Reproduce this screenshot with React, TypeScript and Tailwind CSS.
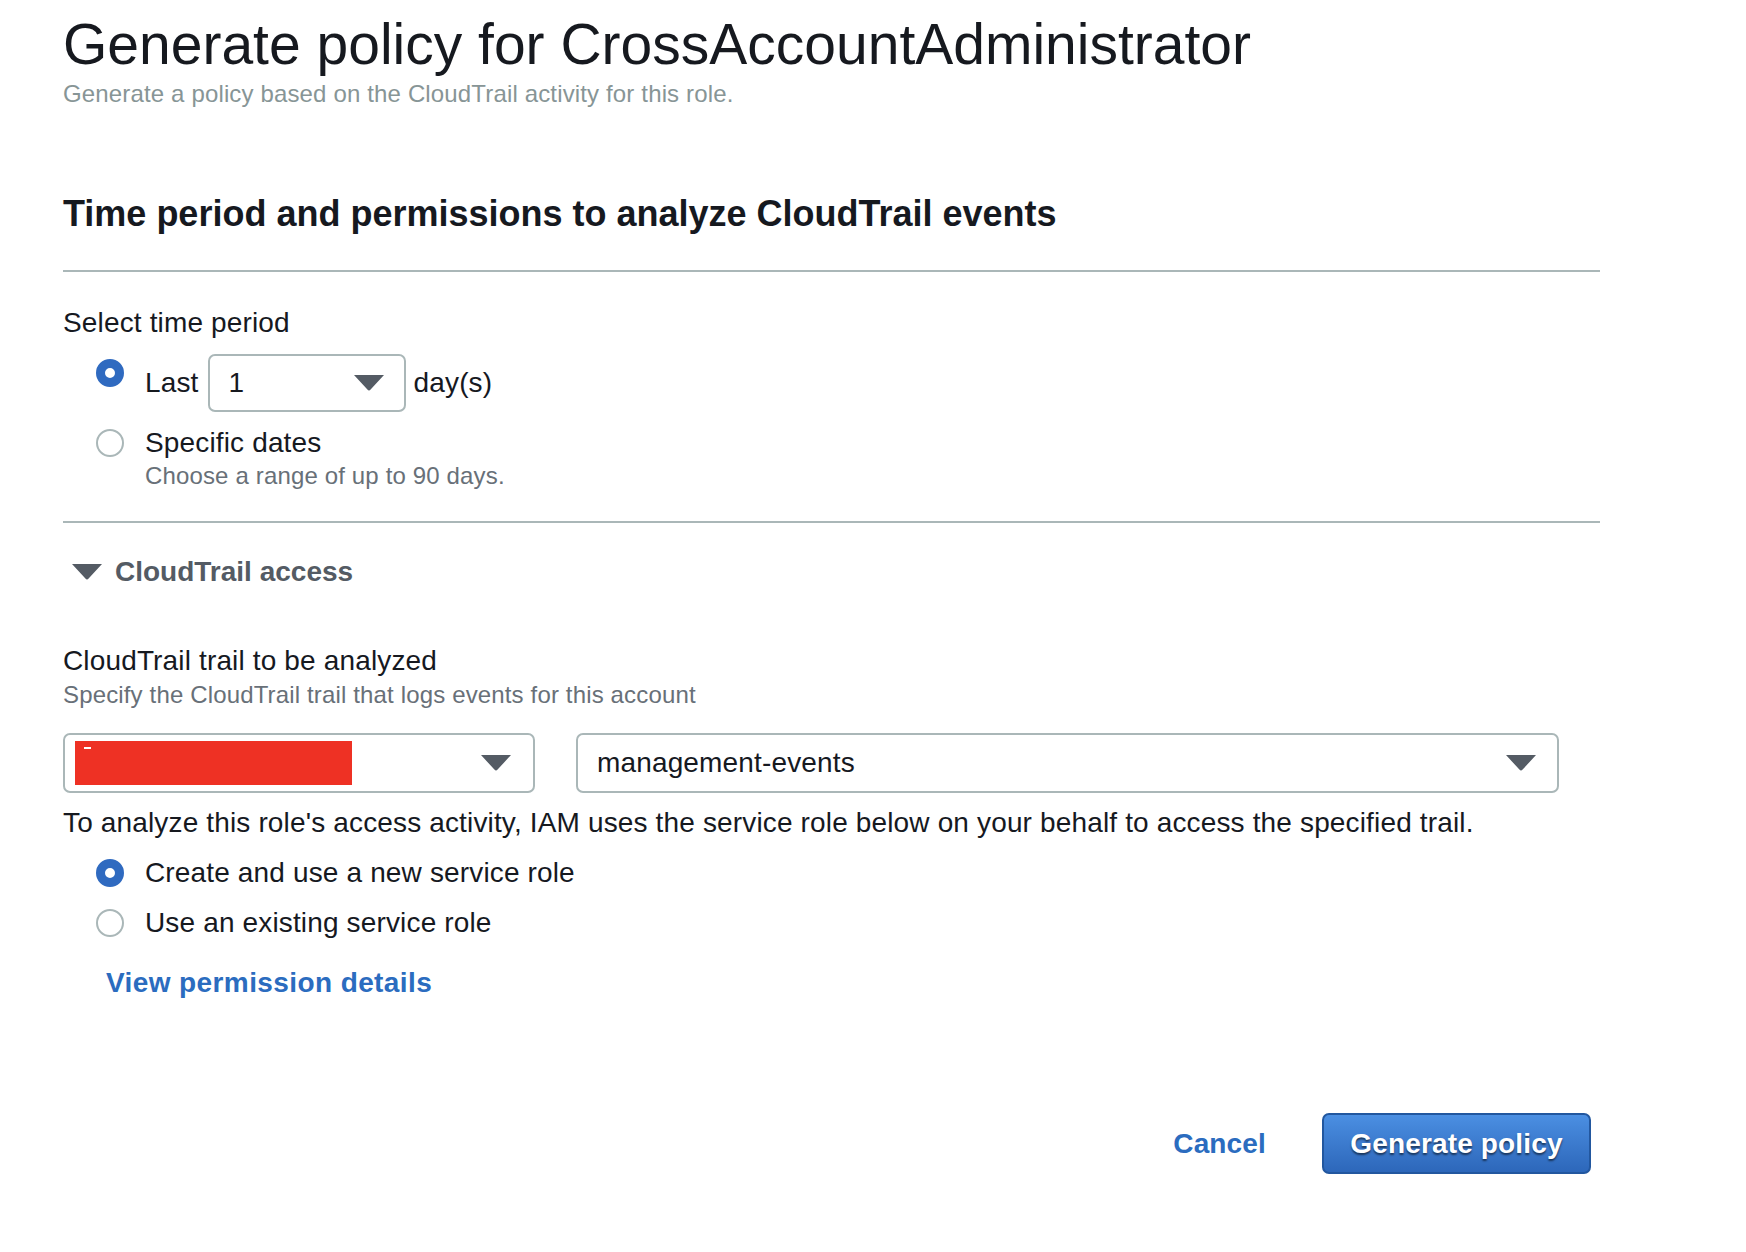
import React from "react";

const Caret = () => (
  <svg width="30" height="16" viewBox="0 0 30 16">
    <path d="M0 0 H30 L16.6 14.6 Q15 16.4 13.4 14.6 Z" fill="#545b64" />
  </svg>
);

const Radio = ({ checked }: { checked?: boolean }) =>
  checked ? (
    <span className="block w-[28px] h-[28px] shrink-0 rounded-full border-[9.5px] border-[#2f6ac0] bg-white" />
  ) : (
    <span className="block w-[28px] h-[28px] shrink-0 rounded-full border-2 border-[#aab7b8] bg-white" />
  );

const Select = ({ className, children }: { className: string; children: React.ReactNode }) => (
  <div
    className={`flex items-center justify-between rounded-[7px] border-2 border-[#aab7b8] bg-white ${className}`}
  >
    {children}
  </div>
);

export default function App() {
  return (
    <div className="min-h-[1252px] bg-white font-['Liberation_Sans',Arial,sans-serif] text-[#16191f] tracking-[0.15px]">
      <div className="w-[1600px] pl-[63px] pt-[16px]">
        {/* Header */}
        <h1 className="text-[57px] leading-[57px] tracking-normal">
          Generate policy for CrossAccountAdministrator
        </h1>
        <p className="mt-[7px] text-[24px] leading-[28px] text-[#879596]">
          Generate a policy based on the CloudTrail activity for this role.
        </p>

        <h2 className="mt-[86px] text-[36px] leading-[40px] font-bold tracking-normal">
          Time period and permissions to analyze CloudTrail events
        </h2>
        <div className="mt-[36px] h-[2px] bg-[#aab7b8]" />

        {/* Time period */}
        <div className="mt-[35px] text-[28px] leading-[32px]">Select time period</div>
        <div className="mt-[15px] flex pl-[33px]">
          <div className="pt-[5px]">
            <Radio checked />
          </div>
          <div className="ml-[21px] flex items-center text-[28px] leading-[32px]">
            <span>Last</span>
            <Select className="ml-[9px] w-[198px] h-[58px] pl-[19px] pr-[20px]">
              <span>1</span>
              <Caret />
            </Select>
            <span className="ml-[8px]">day(s)</span>
          </div>
        </div>
        <div className="mt-[15px] flex pl-[33px]">
          <div className="pt-[2px]">
            <Radio />
          </div>
          <div className="ml-[21px]">
            <div className="text-[28px] leading-[32px]">Specific dates</div>
            <div className="mt-[3px] text-[24px] leading-[28px] text-[#687078]">
              Choose a range of up to 90 days.
            </div>
          </div>
        </div>
        <div className="mt-[31px] h-[2px] bg-[#aab7b8]" />

        {/* CloudTrail access */}
        <div className="mt-[33px] flex items-center pl-[9px] text-[28px] leading-[32px] font-bold text-[#545b64] tracking-normal">
          <Caret />
          <span className="ml-[13px]">CloudTrail access</span>
        </div>

        <div className="mt-[57px] text-[28px] leading-[32px]">CloudTrail trail to be analyzed</div>
        <div className="mt-[4px] text-[24px] leading-[28px] text-[#687078]">
          Specify the CloudTrail trail that logs events for this account
        </div>

        <div className="mt-[24px] flex gap-[41px] pr-[41px]">
          <Select className="w-[472px] h-[60px] pl-[10px] pr-[22px]">
            <div className="relative w-[277px] h-[44px] bg-[#ee3124]">
              <span className="absolute left-[9px] top-[6px] w-[7px] h-[2px] bg-white" />
            </div>
            <Caret />
          </Select>
          <Select className="flex-1 h-[60px] pl-[19px] pr-[21px] text-[28px] leading-[32px]">
            <span>management-events</span>
            <Caret />
          </Select>
        </div>

        <p className="mt-[14px] text-[28px] leading-[32px]">
          To analyze this role's access activity, IAM uses the service role below on your behalf to access the
          specified trail.
        </p>
        <div className="mt-[18px] flex items-center pl-[33px] text-[28px] leading-[32px]">
          <Radio checked />
          <span className="ml-[21px]">Create and use a new service role</span>
        </div>
        <div className="mt-[18px] flex items-center pl-[33px] text-[28px] leading-[32px]">
          <Radio />
          <span className="ml-[21px]">Use an existing service role</span>
        </div>
        <div className="mt-[28px] pl-[43px] text-[28px] leading-[32px] font-bold text-[#2b6cbf] tracking-[0.4px]">
          View permission details
        </div>

        {/* Footer actions */}
        <div className="mt-[114px] flex items-center justify-end pr-[9px]">
          <span className="text-[28px] leading-[32px] font-bold text-[#2b6cbf]">Cancel</span>
          <button className="ml-[56px] w-[269px] h-[61px] rounded-[7px] border-2 border-[#22579f] bg-linear-to-b from-[#4b8fe2] to-[#2d67ba] text-[28px] font-bold text-white [text-shadow:0_2px_2px_rgba(0,0,0,0.55)]">
            Generate policy
          </button>
        </div>
      </div>
    </div>
  );
}
